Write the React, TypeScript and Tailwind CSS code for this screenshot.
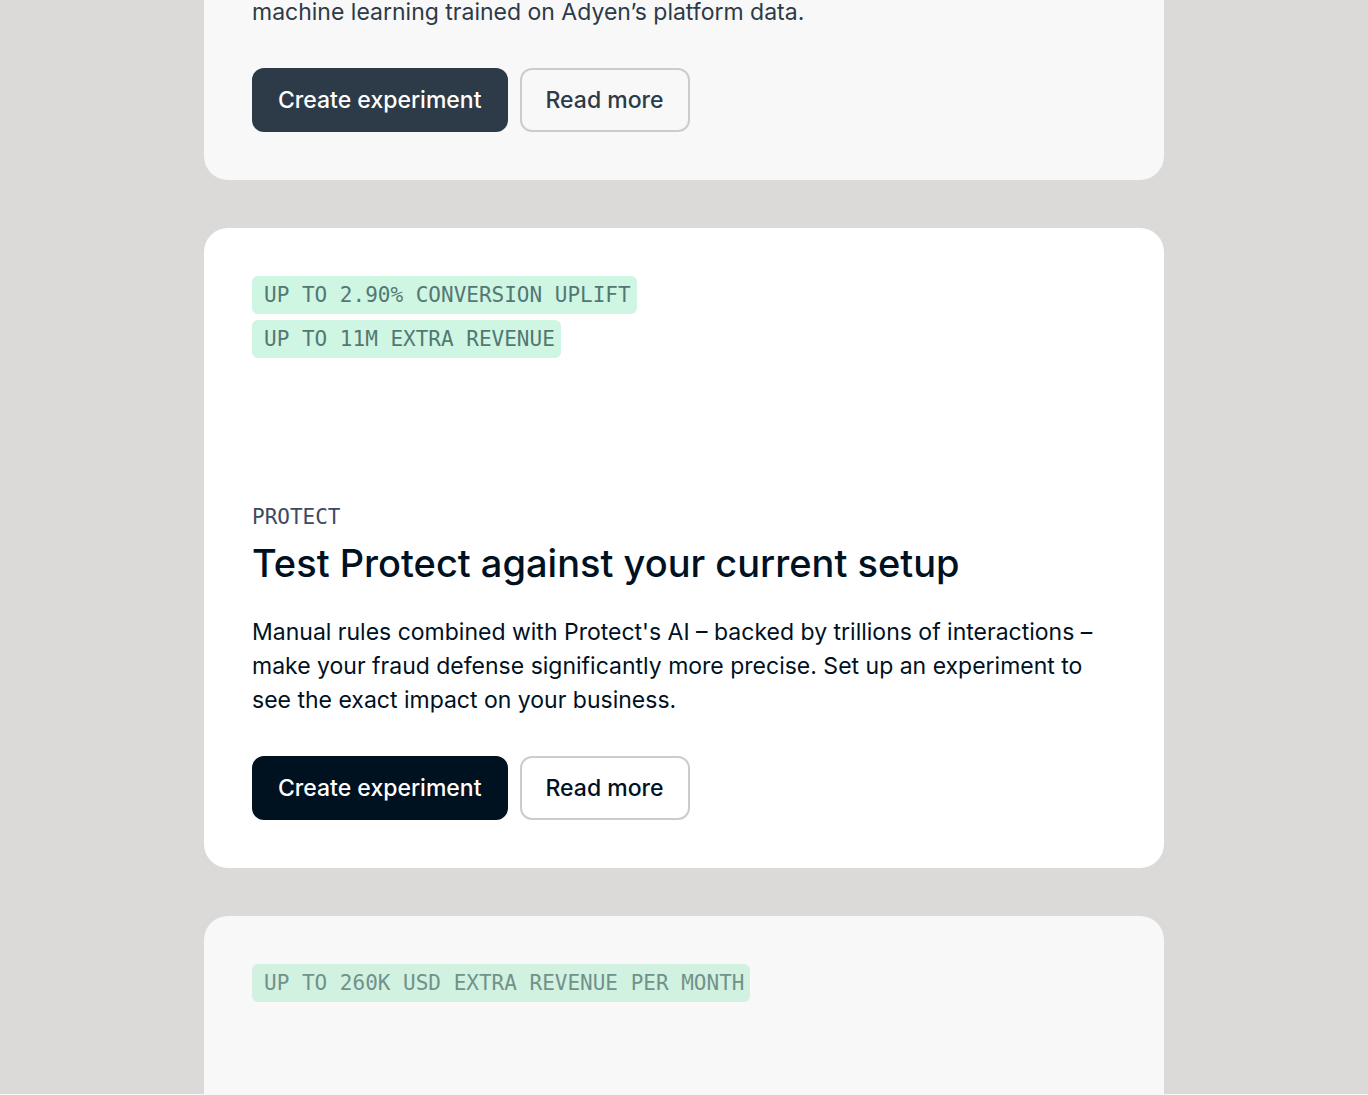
import type { ReactNode } from "react";

interface BadgeProps {
  children: ReactNode;
  muted?: boolean;
}

const Badge: React.FC<BadgeProps> = ({ children, muted }) => {
  return (
    <li
      className={`rounded-md pl-3 pr-1.5 font-['DejaVu_Sans_Mono',monospace] text-[21px] leading-[38px] uppercase ${
        muted ? "bg-[#d1f1e1] text-[#72918a]" : "bg-[#cff5e3] text-[#537873]"
      }`}
    >
      {children}
    </li>
  );
};

const Actions: React.FC<{ muted?: boolean }> = ({ muted }) => {
  return (
    <div className="mt-[39px] flex flex-wrap gap-3 text-[23px] font-medium">
      <button
        type="button"
        className={`h-16 rounded-xl border-2 px-6 text-white ${
          muted ? "border-[#2d3a47] bg-[#2d3a47]" : "border-[#00111f] bg-[#00111f]"
        }`}
      >
        Create experiment
      </button>
      <button
        type="button"
        className={`h-16 rounded-xl border-2 border-[#cccccc] px-6 ${
          muted ? "text-[#2d3a47]" : "text-[#00111f]"
        }`}
      >
        Read more
      </button>
    </div>
  );
};

const App: React.FC = () => {
  return (
    <div className="h-screen overflow-hidden border-b border-[#f7f7f8] bg-[#dbdad9] font-['Inter',sans-serif] text-[#00111f]">
      <main className="mx-auto flex h-full max-w-[960px] flex-col gap-12">
        <section className="-mt-[5px] shrink-0 rounded-b-3xl bg-[#f8f8f8] px-12 pb-12">
          <p className="text-[23px] leading-[34px] text-[#2d3a47]">
            machine learning trained on Adyen’s platform data.
          </p>
          <Actions muted />
        </section>

        <section className="flex min-h-[640px] shrink-0 flex-col justify-between rounded-3xl bg-white p-12">
          <ul className="flex flex-col items-start gap-1.5">
            <Badge>Up to 2.90% conversion uplift</Badge>
            <Badge>Up to 11M extra revenue</Badge>
          </ul>
          <div>
            <p className="font-['DejaVu_Sans_Mono',monospace] text-[21px] leading-7 text-[#3d4a60] uppercase">
              Protect
            </p>
            <h2 className="mt-2 text-[38px] leading-12 font-medium">
              Test Protect against your current setup
            </h2>
            <p className="mt-7 text-[23px] leading-[34px]">
              Manual rules combined with Protect's AI – backed by trillions of interactions – make
              your fraud defense significantly more precise. Set up an experiment to see the exact
              impact on your business.
            </p>
            <Actions />
          </div>
        </section>

        <section className="flex-1 rounded-t-3xl bg-[#f8f8f8] px-12 pt-12">
          <ul className="flex flex-col items-start">
            <Badge muted>Up to 260K USD extra revenue per month</Badge>
          </ul>
        </section>
      </main>
    </div>
  );
};

export default App;
